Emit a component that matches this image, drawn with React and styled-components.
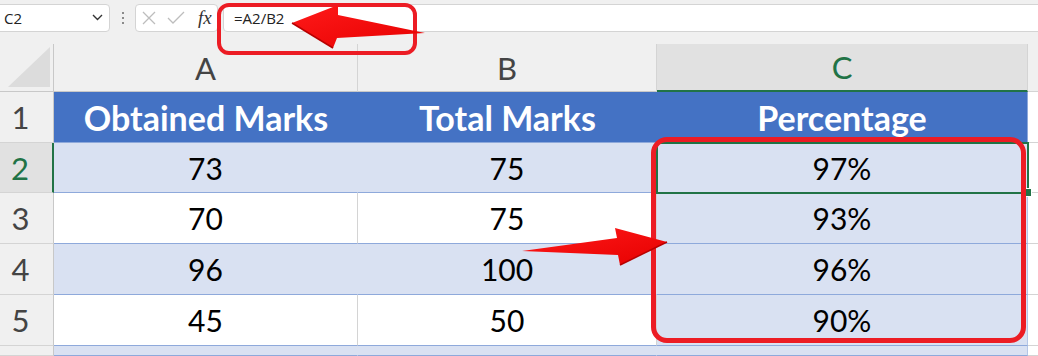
import React from "react";
import styled, { createGlobalStyle } from "styled-components";

const GlobalStyle = createGlobalStyle`
  html, body {
    margin: 0;
    background: #f0f0f0;
  }
  * {
    box-sizing: border-box;
  }
`;

const Frame = styled.div`
  position: relative;
  width: 1038px;
  height: 356px;
  overflow: hidden;
  background: #f0f0f0;
`;

/* ---- formula bar ---- */

const FormulaBar = styled.div`
  display: flex;
  align-items: center;
  height: 44px;
  padding-bottom: 9px;
  font-family: "Open Sans", sans-serif;
  font-size: 15px;
  color: #222;
`;

const Box = styled.div`
  display: flex;
  align-items: center;
  height: 28px;
  background: #fff;
  border: 1px solid #d4d4d4;
  border-radius: 4px;
`;

const NameBox = styled(Box)`
  width: 114px;
  margin-left: -4px;
  padding: 0 6px 0 7px;
  justify-content: space-between;
`;

const Grip = styled.div`
  display: flex;
  flex-direction: column;
  gap: 3px;
  margin: 0 11px 0 12px;

  span {
    width: 2px;
    height: 2px;
    background: #8a8a8a;
  }
`;

const FxBox = styled(Box)`
  width: 83px;
  padding: 0 4px 0 5px;
  gap: 10px;
`;

const FxLabel = styled.span`
  font-family: "Liberation Serif", serif;
  font-style: italic;
  font-size: 19px;
  color: #333;
  margin-left: 3px;
`;

const FormulaInput = styled(Box)`
  flex: 1;
  margin-left: 5px;
  margin-right: -6px;
  padding-left: 10px;
`;

/* ---- sheet grid ---- */

const Sheet = styled.div`
  display: grid;
  grid-template-columns: 54px 304px 299px 371px 1fr;
  grid-template-rows: 48px 51px 50px 51px 51px 51px 1fr;
  height: 312px;
  font-family: Lato, "Open Sans", sans-serif;
`;

const Corner = styled.div`
  background: #f0f0f0;
  border-right: 1px solid #c8c8c8;
  border-bottom: 1px solid #c8c8c8;
  display: flex;
  align-items: flex-end;
  justify-content: flex-end;
  padding: 0 3px 4px 0;
`;

const ColHead = styled.div`
  display: flex;
  align-items: center;
  justify-content: center;
  font-size: 31px;
  color: ${(p) => (p.$active ? "#217346" : "#444")};
  background: ${(p) => (p.$active ? "#e1e1e1" : "#f0f0f0")};
  border-right: 1px solid #d4d4d4;
  border-bottom: ${(p) => (p.$active ? "2px solid #217346" : "1px solid #c8c8c8")};
`;

const RowHead = styled.div`
  display: flex;
  align-items: center;
  justify-content: center;
  padding-right: 12px;
  font-size: 31px;
  color: ${(p) => (p.$active ? "#217346" : "#444")};
  background: ${(p) => (p.$active ? "#e1e1e1" : "#f0f0f0")};
  border-bottom: 1px solid #d4d4d4;
  border-right: ${(p) => (p.$active ? "2px solid #217346" : "1px solid #c8c8c8")};
`;

const TitleCell = styled.div`
  display: flex;
  align-items: center;
  justify-content: center;
  font-size: 34px;
  font-weight: 700;
  color: #fff;
  background: #4472c4;
  border-bottom: 1px solid #8ea9db;
  border-right: ${(p) => (p.$edge ? "1px solid #8ea9db" : "none")};
`;

const Cell = styled.div`
  position: relative;
  display: flex;
  align-items: center;
  justify-content: center;
  font-size: 30px;
  color: #000;
  background: ${(p) => (p.$band ? "#d9e1f2" : "#fff")};
  border-bottom: 1px solid #8ea9db;
  border-right: 1px solid
    ${(p) => (p.$edge ? "#b4c6e7" : p.$band ? "#d9e1f2" : "#d4d4d4")};
  z-index: ${(p) => (p.$selected ? 2 : "auto")};

  ${(p) =>
    p.$selected &&
    `
    &::after {
      content: "";
      position: absolute;
      top: -1px;
      left: -1px;
      right: -2px;
      bottom: -2px;
      border: 2px solid #217346;
    }
    &::before {
      content: "";
      position: absolute;
      right: -5px;
      bottom: -5px;
      width: 7px;
      height: 7px;
      background: #217346;
      border: 1px solid #fff;
      z-index: 1;
    }
  `}
`;

const Blank = styled.div`
  background: ${(p) => (p.$head ? "#f0f0f0" : "#fff")};
  border-bottom: 1px solid #d4d4d4;
`;

/* ---- red annotations ---- */

const Callout = styled.div`
  position: absolute;
  left: ${(p) => p.$x}px;
  top: ${(p) => p.$y}px;
  width: ${(p) => p.$w}px;
  height: ${(p) => p.$h}px;
  border: ${(p) => p.$stroke}px solid #ec1c24;
  border-radius: ${(p) => p.$r}px;
  pointer-events: none;
  z-index: 5;
`;

const ArrowLayer = styled.svg`
  position: absolute;
  left: 0;
  top: 0;
  width: 1038px;
  height: 356px;
  pointer-events: none;
  z-index: 6;
`;

const XIcon = () => (
  <svg width="16" height="16" viewBox="0 0 16 16">
    <path d="M2 2 L14 14 M14 2 L2 14" stroke="#bdbdbd" strokeWidth="1.3" fill="none" />
  </svg>
);

const CheckIcon = () => (
  <svg width="18" height="16" viewBox="0 0 18 16">
    <path d="M1 8 L6 13 L17 2" stroke="#bdbdbd" strokeWidth="1.3" fill="none" />
  </svg>
);

const Chevron = () => (
  <svg width="11" height="7" viewBox="0 0 11 7">
    <path d="M1 1 L5.5 5.5 L10 1" stroke="#333" strokeWidth="1.4" fill="none" />
  </svg>
);

const SelectAll = () => (
  <svg width="42" height="40" viewBox="0 0 42 40">
    <path d="M42 0 L42 40 L0 40 Z" fill="#dcdcdc" />
  </svg>
);

const rows = [
  { n: 2, a: "73", b: "75", c: "97%" },
  { n: 3, a: "70", b: "75", c: "93%" },
  { n: 4, a: "96", b: "100", c: "96%" },
  { n: 5, a: "45", b: "50", c: "90%" },
];

const App = () => {
  return (
    <>
      <GlobalStyle />
      <Frame>
        <FormulaBar>
          <NameBox>
            <span>C2</span>
            <Chevron />
          </NameBox>
          <Grip>
            <span />
            <span />
            <span />
          </Grip>
          <FxBox>
            <XIcon />
            <CheckIcon />
            <FxLabel>fx</FxLabel>
          </FxBox>
          <FormulaInput>=A2/B2</FormulaInput>
        </FormulaBar>

        <Sheet>
          <Corner>
            <SelectAll />
          </Corner>
          <ColHead>A</ColHead>
          <ColHead>B</ColHead>
          <ColHead $active>C</ColHead>
          <Blank $head />

          <RowHead>1</RowHead>
          <TitleCell>Obtained Marks</TitleCell>
          <TitleCell>Total Marks</TitleCell>
          <TitleCell $edge>Percentage</TitleCell>
          <Blank />

          {rows.map((r, i) => {
            const band = i % 2 === 0;
            return (
              <React.Fragment key={r.n}>
                <RowHead $active={r.n === 2}>{r.n}</RowHead>
                <Cell $band={band}>{r.a}</Cell>
                <Cell $band={band}>{r.b}</Cell>
                <Cell $band $edge $selected={r.n === 2}>
                  {r.c}
                </Cell>
                <Blank />
              </React.Fragment>
            );
          })}

          <RowHead />
          <Cell $band />
          <Cell $band />
          <Cell $band $edge />
          <Blank />
        </Sheet>

        <Callout $x={217} $y={3} $w={200} $h={52} $stroke={4} $r={12} />
        <Callout $x={651} $y={137} $w={375} $h={206} $stroke={5} $r={16} />

        <ArrowLayer viewBox="0 0 1038 356">
          <defs>
            <linearGradient id="redFill" x1="0" y1="0" x2="1" y2="1">
              <stop offset="0" stopColor="#ff1a1a" />
              <stop offset="1" stopColor="#e60000" />
            </linearGradient>
          </defs>
          {/* arrow pointing at the formula */}
          <polygon
            points="292,23 338,5 338,15 425,33 337,38 333,48"
            fill="url(#redFill)"
          />
          <path d="M292 23 L333 48" stroke="#b80000" strokeWidth="1.5" fill="none" />
          {/* arrow pointing at the results */}
          <polygon
            points="667,242 615,228 617,238 522,251 618,255 620,265"
            fill="url(#redFill)"
          />
          <path d="M667 242 L620 265" stroke="#b80000" strokeWidth="1.5" fill="none" />
        </ArrowLayer>
      </Frame>
    </>
  );
};

export default App;
